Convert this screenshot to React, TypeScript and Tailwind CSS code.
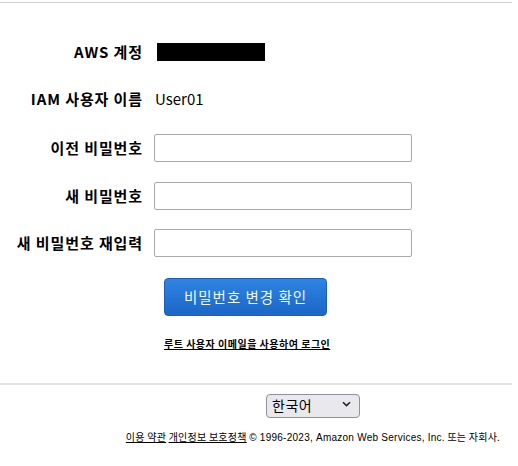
import React from "react";

const ko = { fontFamily: '"Noto Sans CJK KR", "Noto Sans", sans-serif' };

export default function App() {
  const label = "text-right text-[15px] font-bold leading-[28px] tracking-[0.9px]";
  const input = "w-[258px] h-[28px] border border-[#a9a9b1] rounded-[2px] bg-white outline-none";
  return (
    <div className="w-[518px] h-[466px] bg-white text-black overflow-hidden" style={ko}>
      <div className="h-[2px]" />
      <div className="h-px bg-[#cfcfcf] w-[512px]" />
      <div className="pt-[35px] grid grid-cols-[143px_1fr] gap-x-[11px] items-center">
        <div className={label}>AWS 계정</div>
        <div className="h-[28px] flex items-center">
          <div className="w-[108px] h-[18px] bg-black ml-[3px]" />
        </div>
        <div className={label + " mt-[19px]"}>IAM 사용자 이름</div>
        <div className="text-[15px] leading-[28px] pl-[1px] mt-[19px]">User01</div>
        <div className={label + " mt-[21px]"}>이전 비밀번호</div>
        <input type="password" className={input + " mt-[21px]"} />
        <div className={label + " mt-[20px]"}>새 비밀번호</div>
        <input type="password" className={input + " mt-[20px]"} />
        <div className={label + " mt-[19px]"}>새 비밀번호 재입력</div>
        <input type="password" className={input + " mt-[19px]"} />
      </div>
      <div className="pl-[164px] pt-[21px]">
        <button className="w-[163px] h-[38px] rounded-[4px] border border-[#1c5fb5] bg-gradient-to-b from-[#2f84e4] to-[#1b66c6] text-[#f2f6ff] text-[14.5px] tracking-[1px]">
          비밀번호 변경 확인
        </button>
        <div className="pt-[13px]">
          <a href="#" className="text-[10px] font-bold underline leading-[14px] tracking-[0.5px]">
            루트 사용자 이메일을 사용하여 로그인
          </a>
        </div>
      </div>
      <div className="mt-[30px] h-[2px] bg-[#e4e4e4] w-[512px]" />
      <div className="pl-[108px] flex flex-col items-center pt-[7px]">
        <div className="relative w-[94px] h-[24px]">
          <select className="appearance-none w-full h-full border border-[#8f8f9d] rounded-[4px] bg-[#e9e9ed] text-[14px] pl-[5px] outline-none tracking-[0.5px]" style={ko}>
            <option>한국어</option>
          </select>
          <svg className="absolute right-[9px] top-[9px] pointer-events-none" width="9" height="6" viewBox="0 0 9 6">
            <path d="M1 1.2 L4.5 4.6 L8 1.2" fill="none" stroke="#222" strokeWidth="1.6" />
          </svg>
        </div>
        <div className="pt-[13px] text-[10px] whitespace-nowrap tracking-[0.25px]">
          <a href="#" className="underline">이용 약관</a>{" "}
          <a href="#" className="underline">개인정보 보호정책</a>{" "}
          <span style={{ fontFamily: '"Liberation Sans", "Noto Sans CJK KR", sans-serif' }}>© 1996-2023, Amazon Web Services, Inc.</span> 또는 자회사.
        </div>
      </div>
    </div>
  );
}
